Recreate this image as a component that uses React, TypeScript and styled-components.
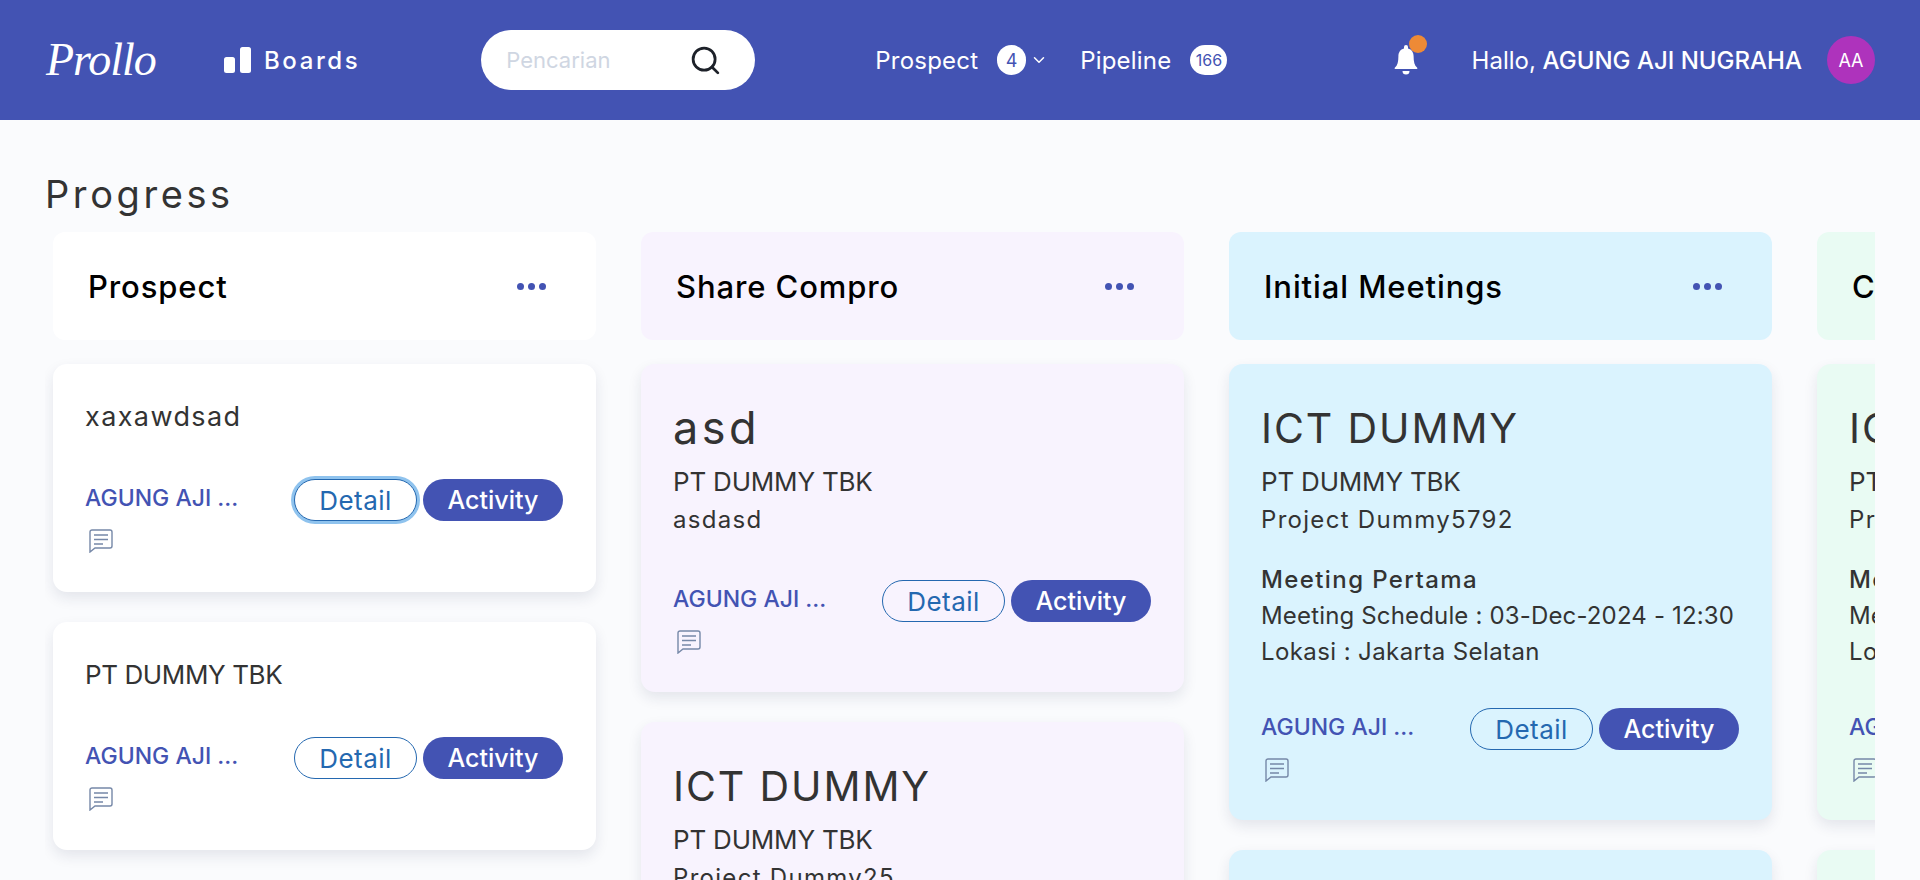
import React from 'react'
import styled, { createGlobalStyle } from 'styled-components'
import { Search, ChevronDown } from 'lucide-react'

const GlobalStyle = createGlobalStyle`
  html, body {
    margin: 0;
    height: 880px;
    overflow: hidden;
    background: #fafbfd;
    font-family: Inter, "Noto Sans", sans-serif;
    color: #333;
  }
  * { box-sizing: border-box; }
`

// HEADER

const Header = styled.header`
  height: 120px;
  background: #4353b3;
  color: #fff;
  display: flex;
  align-items: center;
  padding: 0 45px 0 46px;
`

const Logo = styled.div`
  width: 112px;
  font-family: "Liberation Serif", serif;
  font-style: italic;
  font-size: 46px;
  line-height: 50px;
  letter-spacing: -1px;
  color: #fff;
`

const BoardsLink = styled.div`
  display: flex;
  align-items: center;
  gap: 12px;
  margin-left: 66px;
  font-size: 24px;
  font-weight: 500;
  letter-spacing: 2.6px;
`

const SearchBox = styled.div`
  width: 274px;
  height: 60px;
  margin-left: 121px;
  padding: 0 33px 0 25px;
  border-radius: 30px;
  background: #fff;
  display: flex;
  align-items: center;
  justify-content: space-between;
  color: #1d2129;
`

const Placeholder = styled.span`
  font-size: 22px;
  color: #cfd6e2;
`

const NavLink = styled.div<{ $first?: boolean }>`
  display: flex;
  align-items: center;
  margin-left: ${props => props.$first ? '120px' : '32px'};
  font-size: 24px;
  letter-spacing: 0.2px;
`

const CountBadge = styled.span<{ $wide?: boolean }>`
  width: ${props => props.$wide ? '37px' : '29px'};
  height: 30px;
  margin-left: 19px;
  border-radius: 15px;
  background: #fff;
  color: #4353b3;
  font-size: ${props => props.$wide ? '16px' : '18px'};
  letter-spacing: 0;
  display: flex;
  align-items: center;
  justify-content: center;
`

const UserArea = styled.div`
  margin-left: auto;
  display: flex;
  align-items: center;
`

const BellWrap = styled.div`
  position: relative;
  width: 24px;
  height: 30px;
  margin-right: 54px;
`

const BellDot = styled.span`
  position: absolute;
  top: -10px;
  right: -9px;
  width: 18px;
  height: 18px;
  border-radius: 50%;
  background: #ee8a36;
`

const Greeting = styled.div`
  font-size: 24px;
  white-space: nowrap;
  b { font-weight: 500; }
`

const Avatar = styled.div`
  width: 48px;
  height: 48px;
  margin-left: 25px;
  border-radius: 50%;
  background: #ae33bc;
  font-size: 18px;
  display: flex;
  align-items: center;
  justify-content: center;
`

// BOARD

const Main = styled.main`
  padding: 47px 45px 0;
`

const PageTitle = styled.h1`
  margin: 0 0 11px;
  font-size: 38px;
  line-height: 54px;
  font-weight: 400;
  letter-spacing: 3.6px;
  color: #333;
`

const Board = styled.div`
  display: flex;
  gap: 45px;
  height: 648px;
  padding-left: 8px;
  overflow: hidden;
`

const Column = styled.section`
  flex: 0 0 543px;
  display: flex;
  flex-direction: column;
  gap: 30px;
`

const ColumnHead = styled.div<{ $tint: string }>`
  flex: 0 0 108px;
  margin-bottom: -6px;
  padding: 0 50px 0 35px;
  border-radius: 12px;
  background: ${props => props.$tint};
  display: flex;
  align-items: center;
  justify-content: space-between;
  font-size: 31px;
  font-weight: 500;
  letter-spacing: 0.9px;
  color: #000;
`

const Dots = styled.div`
  display: flex;
  gap: 4px;
  span {
    width: 7px;
    height: 7px;
    border-radius: 50%;
    background: #4353b3;
  }
`

const Card = styled.article<{ $tint: string; $big?: boolean }>`
  flex-shrink: 0;
  padding: ${props => props.$big ? '34px 33px 38px 32px' : '33px 33px 39px 32px'};
  border-radius: 14px;
  background: ${props => props.$tint};
  box-shadow: 0 6px 14px rgba(30, 40, 80, 0.1);
`

const SmallTitle = styled.div<{ $caps: boolean }>`
  font-size: ${props => props.$caps ? '26px' : '27px'};
  letter-spacing: ${props => props.$caps ? '-0.4px' : '1.4px'};
  line-height: 40px;
  margin-bottom: 42px;
`

const BigTitle = styled.div<{ $caps: boolean }>`
  font-size: ${props => props.$caps ? '41px' : '45px'};
  letter-spacing: ${props => props.$caps ? '1.9px' : '3.5px'};
  line-height: 60px;
  margin-bottom: 5px;
`

const Company = styled.div`
  font-size: 26px;
  line-height: 38px;
  letter-spacing: -0.2px;
`

const Project = styled.div`
  font-size: 24px;
  line-height: 38px;
  letter-spacing: 1.3px;
`

const MeetingBlock = styled.div`
  margin-top: 23px;
  font-size: 24px;
  line-height: 36px;
  white-space: nowrap;
  strong {
    display: block;
    font-weight: 500;
    letter-spacing: 1.4px;
  }
`

const Schedule = styled.div`
  letter-spacing: 0.16px;
`

const Location = styled.div`
  letter-spacing: 0.4px;
`

const Meta = styled.div<{ $gap: number }>`
  margin-top: ${props => props.$gap}px;
  display: flex;
  justify-content: space-between;
`

const Owner = styled.div`
  font-size: 23px;
  line-height: 38px;
  font-weight: 500;
  color: #4353b3;
  white-space: nowrap;
`

const CommentIcon = styled.svg`
  display: block;
  margin: 12px 0 0 4px;
`

const Buttons = styled.div`
  display: flex;
  gap: 6px;
`

const DetailButton = styled.button<{ $focused?: boolean }>`
  width: 123px;
  height: 42px;
  padding: 0;
  border: 1px solid #2468b0;
  border-radius: 21px;
  background: ${props => props.$focused ? '#fff' : 'transparent'};
  box-shadow: ${props => props.$focused ? '0 0 0 3px #8fc3ee' : 'none'};
  color: #2468b0;
  font: inherit;
  font-size: 26px;
  letter-spacing: 0.5px;
`

const ActivityButton = styled.button`
  width: 140px;
  height: 42px;
  padding: 0;
  border: 0;
  border-radius: 21px;
  background: #4353b3;
  color: #fff;
  font: inherit;
  font-size: 25px;
  font-weight: 500;
`

type CardData = {
  title: string
  big?: boolean
  company?: string
  project?: string
  meeting?: boolean
  focused?: boolean
}

const meeting = { big: true, title: 'ICT DUMMY', company: 'PT DUMMY TBK', meeting: true }

const columns: { name: string; tint: string; cards: CardData[] }[] = [
  {
    name: 'Prospect',
    tint: '#ffffff',
    cards: [{ title: 'xaxawdsad', focused: true }, { title: 'PT DUMMY TBK' }],
  },
  {
    name: 'Share Compro',
    tint: '#f8f3fe',
    cards: [
      { big: true, title: 'asd', company: 'PT DUMMY TBK', project: 'asdasd' },
      { big: true, title: 'ICT DUMMY', company: 'PT DUMMY TBK', project: 'Project Dummy25' },
    ],
  },
  {
    name: 'Initial Meetings',
    tint: '#daf3fe',
    cards: [{ ...meeting, project: 'Project Dummy5792' }, { ...meeting, project: 'Project Dummy5792' }],
  },
  {
    name: 'Closing',
    tint: '#e9fbf3',
    cards: [{ ...meeting, project: 'Project Dummy5792' }, { ...meeting, project: 'Project Dummy5792' }],
  },
]

const BoardsIcon = () => (
  <svg width="28" height="26" viewBox="0 0 28 26" fill="#fff">
    <rect x="0" y="10" width="11" height="16" rx="2.5" />
    <rect x="16" y="0" width="11" height="26" rx="2.5" />
  </svg>
)

const BellIcon = () => (
  <svg width="24" height="30" viewBox="0 0 24 30" fill="#fff">
    <path d="M12 0a2 2 0 0 1 2 2v1.4c3.7.9 5.6 4 5.6 7.8 0 5.6.9 9.200 3.400 11.300.6.5.6 1.500-.3 1.500H1.300c-.9 0-.9-1-.3-1.500C3.500 20.400 4.400 16.800 4.400 11.200c0-3.800 1.900-6.900 5.600-7.800V2a2 2 0 0 1 2-2z" />
    <path d="M8.500 26h7a3.500 3.500 0 0 1-7 0z" />
  </svg>
)

const Comment = () => (
  <CommentIcon width="24" height="24" viewBox="0 0 24 24" fill="none" stroke="#7688a8">
    <path d="M3 1h18a2 2 0 0 1 2 2v14a2 2 0 0 1-2 2H6l-5 4V3a2 2 0 0 1 2-2z" strokeWidth="1.400" />
    <path d="M5 6h14M5 10.500h14M5 15h9" strokeWidth="1.600" />
  </CommentIcon>
)

const TaskCard: React.FC<{ card: CardData; tint: string }> = ({ card, tint }) => {
  const caps = card.title === card.title.toUpperCase()
  let gap = 0
  if (card.big) gap = card.meeting ? 38 : 41

  return (
    <Card $tint={tint} $big={card.big}>
      {card.big
        ? <BigTitle $caps={caps}>{card.title}</BigTitle>
        : <SmallTitle $caps={caps}>{card.title}</SmallTitle>}
      {card.company && <Company>{card.company}</Company>}
      {card.project && <Project>{card.project}</Project>}
      {card.meeting && (
        <MeetingBlock>
          <strong>Meeting Pertama</strong>
          <Schedule>Meeting Schedule : 03-Dec-2024 - 12:30</Schedule>
          <Location>Lokasi : Jakarta Selatan</Location>
        </MeetingBlock>
      )}
      <Meta $gap={gap}>
        <div>
          <Owner>AGUNG AJI ...</Owner>
          <Comment />
        </div>
        <Buttons>
          <DetailButton $focused={card.focused}>Detail</DetailButton>
          <ActivityButton>Activity</ActivityButton>
        </Buttons>
      </Meta>
    </Card>
  )
}

const App: React.FC = () => (
  <>
    <GlobalStyle />
    <Header>
      <Logo>Prollo</Logo>
      <BoardsLink>
        <BoardsIcon />
        Boards
      </BoardsLink>
      <SearchBox>
        <Placeholder>Pencarian</Placeholder>
        <Search size={33} strokeWidth={2} />
      </SearchBox>
      <NavLink $first>
        Prospect
        <CountBadge>4</CountBadge>
        <ChevronDown size={18} style={{ marginLeft: 4 }} />
      </NavLink>
      <NavLink>
        Pipeline
        <CountBadge $wide>166</CountBadge>
      </NavLink>
      <UserArea>
        <BellWrap>
          <BellIcon />
          <BellDot />
        </BellWrap>
        <Greeting>Hallo, <b>AGUNG AJI NUGRAHA</b></Greeting>
        <Avatar>AA</Avatar>
      </UserArea>
    </Header>
    <Main>
      <PageTitle>Progress</PageTitle>
      <Board>
        {columns.map(column => (
          <Column key={column.name}>
            <ColumnHead $tint={column.tint}>
              {column.name}
              <Dots><span /><span /><span /></Dots>
            </ColumnHead>
            {column.cards.map((card, i) => (
              <TaskCard key={column.name + i} card={card} tint={column.tint} />
            ))}
          </Column>
        ))}
      </Board>
    </Main>
  </>
)

export default App
